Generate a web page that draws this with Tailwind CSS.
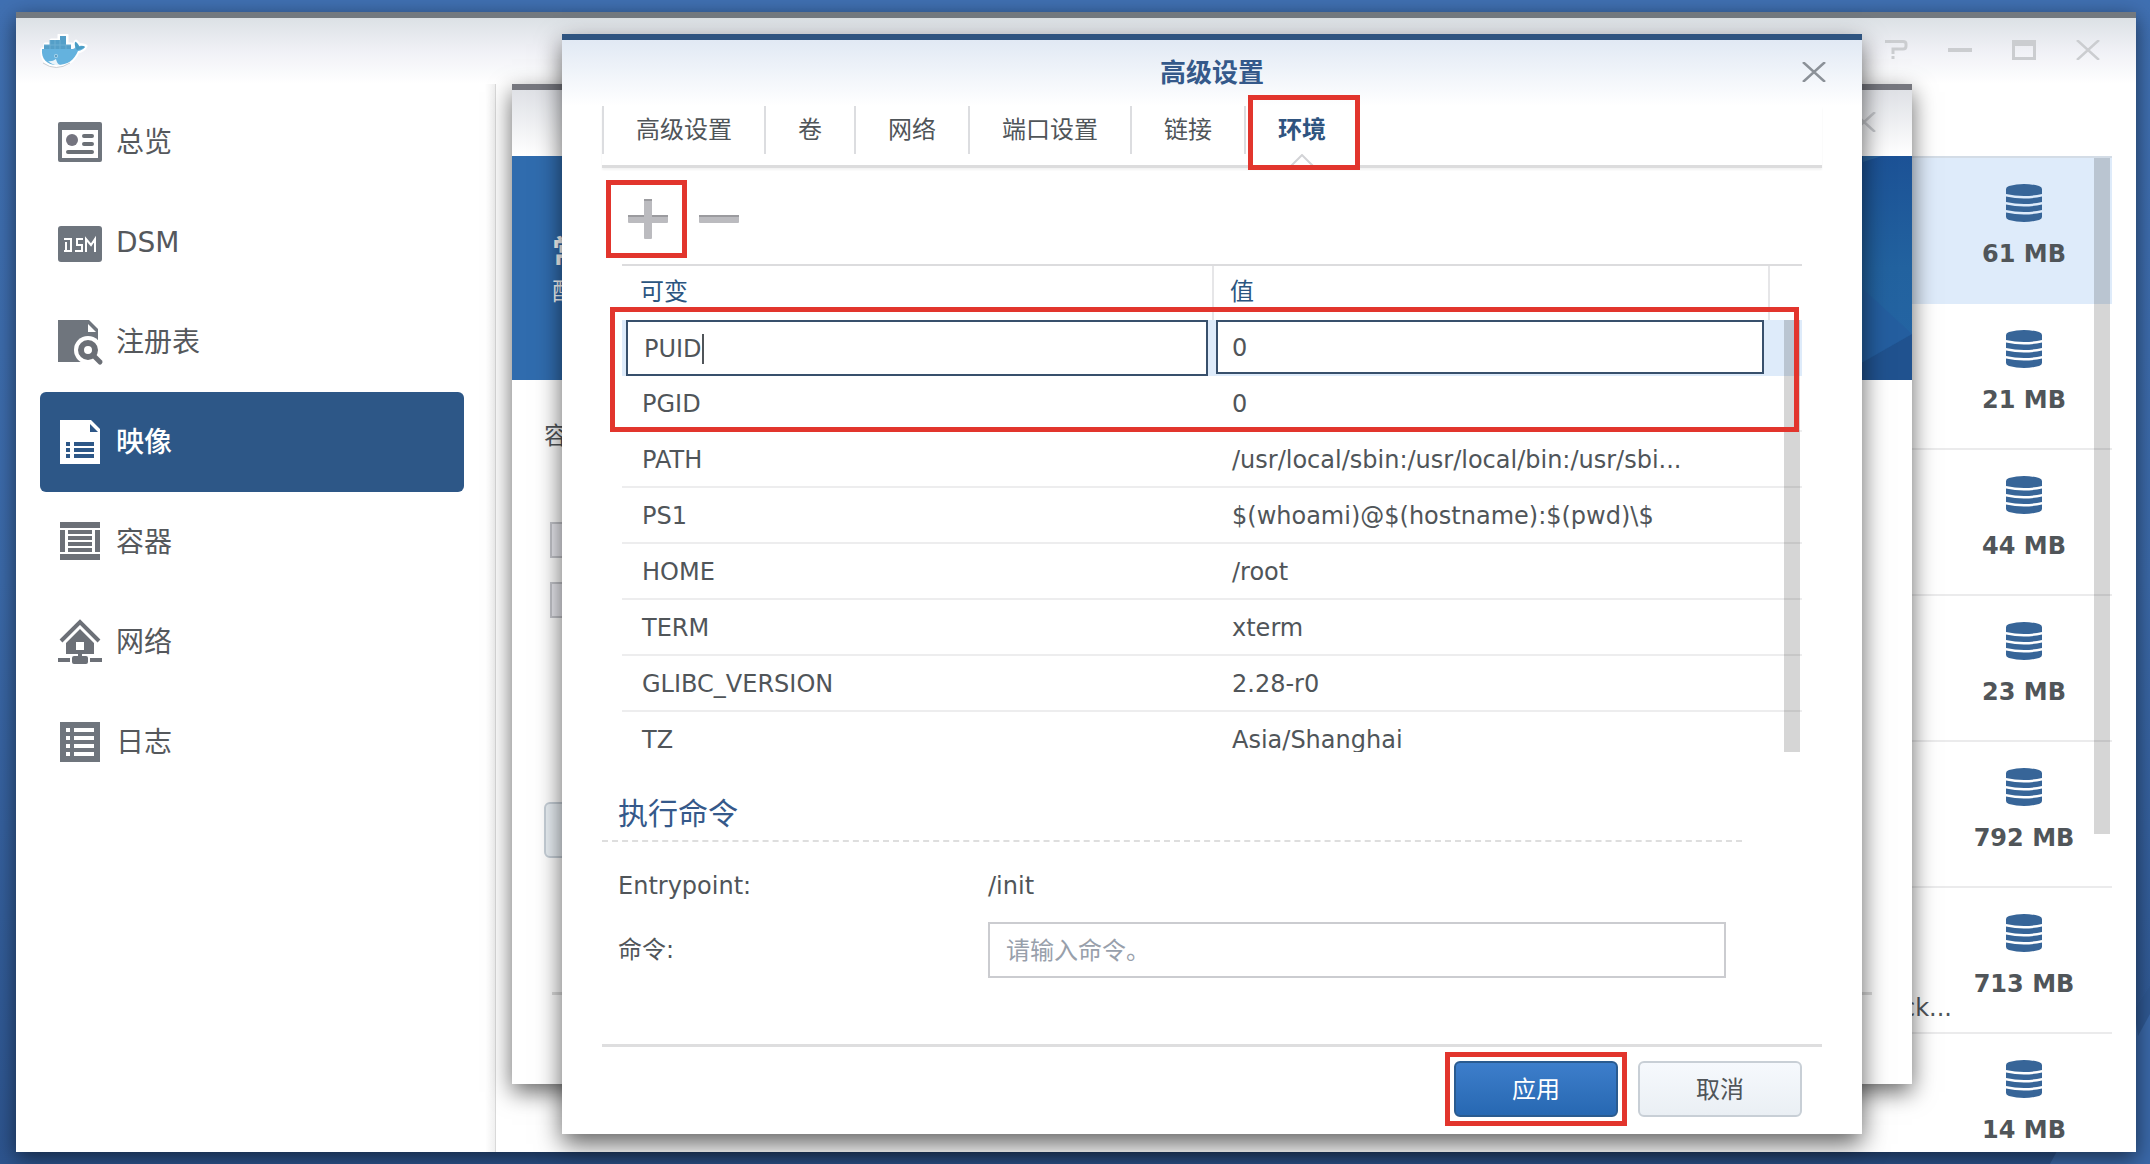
<!DOCTYPE html>
<html lang="zh-CN">
<head>
    <meta charset="UTF-8">
    <meta name="viewport" content="width=device-width, initial-scale=1.0">
    <title>Docker</title>
    <script src="https://cdn.jsdelivr.net/npm/@tailwindcss/browser@4"></script>
</head>
<body class="relative h-screen overflow-hidden bg-linear-to-b from-[#4070b2] via-[#3b69a8] to-[#2d548e] font-['DejaVu_Sans','Noto_Sans_CJK_SC',sans-serif] text-2xl text-[#505559]">
    <!-- Desktop wallpaper -->
    <svg class="absolute right-0 bottom-0 h-[300px] w-[120px]" viewBox="0 0 120 300" aria-hidden="true">
        <path d="M120 0V300H20L104 146L120 121Z" fill="#3a68a8"/>
        <path d="M104 146L120 121V150L108 172Z" fill="#2f5892"/>
    </svg>

    <!-- Shared icons -->
    <svg class="hidden">
        <symbol id="disk" viewBox="0 0 36 38">
            <path d="M0 5Q0 3 3 2Q18-2 33 2Q36 3 36 5V10Q18 14 0 10Z"/>
            <path d="M0 12.500Q18 16.500 36 12.500V18Q18 22 0 18Z"/>
            <path d="M0 20.500Q18 24.500 36 20.500V26Q18 30 0 26Z"/>
            <path d="M0 28.500Q18 32.500 36 28.500V33Q36 35 33 36Q18 40 3 36Q0 35 0 33Z"/>
        </symbol>
        <symbol id="close" viewBox="0 0 24 20">
            <path d="M1 0L23 20M23 0L1 20" fill="none" stroke="currentColor" stroke-width="2.500"/>
        </symbol>
    </svg>

    <!-- Docker window -->
    <div class="absolute top-3 right-3.5 bottom-3 left-4 flex flex-col border-t-6 border-[#73797f] bg-white shadow-[0_6px_20px_rgba(0,0,0,0.55)]">
        <header class="flex h-[66px] shrink-0 items-start justify-between bg-linear-to-b from-[#dce1e5] via-[#f0f1f6] to-white pr-9 pl-6">
            <svg class="mt-4 h-9 w-[48px]" viewBox="0 0 48 36" role="img" aria-label="Docker">
                <path d="M2 15H5V10H11V6H19V1H27V10H32V15H35Q33 10 36 7L40 11Q43 10 46 12Q44 17 38 18C34 27 28 32 17 32C7 32 1 26 2 15Z" fill="#fff" stroke="#fff" stroke-width="3" stroke-linejoin="round"/>
                <path d="M3 29Q16 38 30 29" fill="none" stroke="#c9cdd2" stroke-width="1"/>
                <path d="M4 11H10V6H20V2H26V11H31V16H4Z" fill="#559fc8"/>
                <path d="M10 6V16M15 6V16M20 6V16M26 11V16M4 11H31" stroke="#6caed2" stroke-width="1"/>
                <path d="M2 15H33Q37 14 35 8Q36 7 39 12Q43 11 45 13Q43 16 38 17C34 26 28 31 17 31C7 31 1 25 2 15Z" fill="#64b2de"/>
                <path d="M35 8Q39 10 39 13Q43 11 45 13Q41 16 37 16Q34 12 35 8Z" fill="#4b9dc4"/>
                <path d="M8 27Q12 28 16 25Q17 30 20 31Q13 32 8 27Z" fill="#eaf4fa"/>
                <circle cx="16" cy="22" r="2" fill="#a9d5ec"/>
                <circle cx="16" cy="22" r="1" fill="#4c8cb2"/>
            </svg>
            <div class="mt-[22px] flex gap-10 text-[#cbcdd0]">
                <button type="button" aria-label="帮助">
                    <svg class="h-5 w-6" viewBox="0 0 24 20"><path d="M1 1.500H19Q22 1.500 22 4V6Q22 9 19 9H9V14M9 16V19" fill="none" stroke="currentColor" stroke-width="3"/></svg>
                </button>
                <button type="button" aria-label="最小化">
                    <svg class="h-5 w-6" viewBox="0 0 24 20"><path d="M0 10H24" stroke="currentColor" stroke-width="4"/></svg>
                </button>
                <button type="button" aria-label="最大化">
                    <svg class="h-5 w-6" viewBox="0 0 24 20"><path d="M0 0H24V20H0ZM3 6V17H21V6Z" fill="currentColor" fill-rule="evenodd"/></svg>
                </button>
                <button type="button" aria-label="关闭"><svg class="h-5 w-6"><use href="#close"/></svg></button>
            </div>
        </header>

        <div class="flex min-h-0 flex-1">
            <nav class="flex w-[480px] shrink-0 flex-col border-r border-[#d9d9d9] bg-linear-to-r from-white from-98% to-[#f0f0f0] px-6 pt-2 text-[28px] text-[#55585c]">
                <a href="#" class="flex h-[100px] w-[424px] items-center gap-3 rounded-md px-4">
                    <svg class="size-12" viewBox="0 0 48 48"><path d="M4 4H44Q46 4 46 6V42Q46 44 44 44H4Q2 44 2 42V6Q2 4 4 4ZM6 12V40H42V12Z" fill="#6f757d" fill-rule="evenodd"/><circle cx="16" cy="22" r="6" fill="#74747f"/><path d="M28 18H36M28 26H36M12 34H36" stroke="#6b7076" stroke-width="4" stroke-linecap="round"/></svg>
                    <span class="pt-0.5">总览</span>
                </a>
                <a href="#" class="flex h-[100px] w-[424px] items-center gap-3 rounded-md px-4">
                    <svg class="size-12" viewBox="0 0 48 48"><rect x="2" y="8" width="44" height="36" rx="3" fill="#6e757e"/><path d="M8 21H15V33H8M10 24V33M27 21H21V27H26V33H19M30 34V21L35 27L39 21V34" fill="none" stroke="#fff" stroke-width="2"/></svg>
                    <span class="pt-0.5">DSM</span>
                </a>
                <a href="#" class="flex h-[100px] w-[424px] items-center gap-3 rounded-md px-4">
                    <svg class="size-12" viewBox="0 0 48 48"><path d="M2 2H33L42 11V44H2Z" fill="#6f757d"/><path d="M32 6V14H40Z" fill="#fff"/><circle cx="32" cy="32" r="14" fill="#fff"/><path d="M34 44H44V32Z" fill="#fff"/><circle cx="32" cy="32" r="7" fill="none" stroke="#6b6f76" stroke-width="6"/><path d="M37 37L44 44" stroke="#6b6f76" stroke-width="5" stroke-linecap="round"/></svg>
                    <span class="pt-0.5">注册表</span>
                </a>
                <a href="#" aria-current="page" class="flex h-[100px] w-[424px] items-center gap-3 rounded-md bg-[#2d5787] px-4 font-medium text-white">
                    <svg class="size-12" viewBox="0 0 48 48"><path d="M4 2H35L44 11V46H4Z" fill="#fff"/><path d="M34 6V14H42ZM10 24h4v4h-4ZM18 24h20v4h-20ZM10 30h4v4h-4ZM18 30h20v4h-20ZM10 36h4v4h-4ZM18 36h20v4h-20Z" fill="#2d5787"/></svg>
                    <span class="pt-0.5">映像</span>
                </a>
                <a href="#" class="flex h-[100px] w-[424px] items-center gap-3 rounded-md px-4">
                    <svg class="size-12" viewBox="0 0 48 48"><path d="M4 4H44V10H4ZM4 12H9V34H4ZM39 12H44V34H39ZM4 36H44V42H4ZM12 12H36V16H12ZM12 18H36V22H12ZM12 24H36V28H12ZM12 30H36V34H12Z" fill="#6c7077"/></svg>
                    <span class="pt-0.5">容器</span>
                </a>
                <a href="#" class="flex h-[100px] w-[424px] items-center gap-3 rounded-md px-4">
                    <svg class="size-12" viewBox="0 0 48 48"><path d="M5 23L24 4L43 23" fill="none" stroke="#6c7077" stroke-width="4"/><path d="M24 11L38 25V36H26V38H30Q32 38 32 40V44Q32 46 30 46H18Q16 46 16 44V40Q16 38 18 38H22V36H10V25ZM20 24V32H28V24ZM2 40H14V44H2ZM34 40H46V44H34Z" fill="#6c7077" fill-rule="evenodd"/></svg>
                    <span class="pt-0.5">网络</span>
                </a>
                <a href="#" class="flex h-[100px] w-[424px] items-center gap-3 rounded-md px-4">
                    <svg class="size-12" viewBox="0 0 48 48"><path d="M4 4H44V44H4Z" fill="#6f757d"/><path d="M10 10h4v4h-4ZM18 10h20v4h-20ZM10 18h4v4h-4ZM18 18h20v4h-20ZM10 26h4v4h-4ZM18 26h20v4h-20ZM10 34h4v4h-4ZM18 34h20v4h-20Z" fill="#fff"/></svg>
                    <span class="pt-0.5">日志</span>
                </a>
            </nav>

            <!-- Image list -->
            <main class="relative min-w-0 flex-1 overflow-hidden px-6 pt-[72px]">
                <ul class="border-t-2 border-[#d3dce6] font-bold">
                    <li class="flex h-[146px] justify-end bg-[#deebfa] pr-4">
                        <div class="flex w-36 flex-col items-center pt-[26px]"><svg class="h-[38px] w-9 fill-[#376598]"><use href="#disk"/></svg><span class="mt-[14px] leading-9">61 MB</span></div>
                    </li>
                    <li class="flex h-[146px] justify-end border-b-2 border-[#ebebec] pr-4">
                        <div class="flex w-36 flex-col items-center pt-[26px]"><svg class="h-[38px] w-9 fill-[#376598]"><use href="#disk"/></svg><span class="mt-[14px] leading-9">21 MB</span></div>
                    </li>
                    <li class="flex h-[146px] justify-end border-b-2 border-[#ebebec] pr-4">
                        <div class="flex w-36 flex-col items-center pt-[26px]"><svg class="h-[38px] w-9 fill-[#376598]"><use href="#disk"/></svg><span class="mt-[14px] leading-9">44 MB</span></div>
                    </li>
                    <li class="flex h-[146px] justify-end border-b-2 border-[#ebebec] pr-4">
                        <div class="flex w-36 flex-col items-center pt-[26px]"><svg class="h-[38px] w-9 fill-[#376598]"><use href="#disk"/></svg><span class="mt-[14px] leading-9">23 MB</span></div>
                    </li>
                    <li class="flex h-[146px] justify-end border-b-2 border-[#ebebec] pr-4">
                        <div class="flex w-36 flex-col items-center pt-[26px]"><svg class="h-[38px] w-9 fill-[#376598]"><use href="#disk"/></svg><span class="mt-[14px] leading-9">792 MB</span></div>
                    </li>
                    <li class="flex h-[146px] justify-end border-b-2 border-[#ebebec] pr-4">
                        <span class="self-end pb-1 leading-10 font-normal">ck...</span>
                        <div class="flex w-36 flex-col items-center pt-[26px]"><svg class="h-[38px] w-9 fill-[#376598]"><use href="#disk"/></svg><span class="mt-[14px] leading-9">713 MB</span></div>
                    </li>
                    <li class="flex h-[146px] justify-end pr-4">
                        <div class="flex w-36 flex-col items-center pt-[26px]"><svg class="h-[38px] w-9 fill-[#376598]"><use href="#disk"/></svg><span class="mt-[14px] leading-9">14 MB</span></div>
                    </li>
                </ul>
                <div class="absolute top-[74px] right-[26px] h-[676px] w-4 bg-black/16"></div>
            </main>
        </div>
    </div>

    <!-- Container wizard behind the dialog -->
    <section class="absolute top-[84px] right-[238px] bottom-20 left-[512px] flex flex-col border-t-6 border-[#76777e] bg-white shadow-[0_8px_22px_rgba(0,0,0,0.6)]">
        <div class="flex h-[66px] shrink-0 justify-end bg-linear-to-b from-[#dfe1e6] to-white pt-[22px] pr-9 text-[#c5c7cb]">
            <button type="button" aria-label="关闭" class="h-5"><svg class="h-5 w-6"><use href="#close"/></svg></button>
        </div>
        <div class="relative h-[224px] shrink-0 overflow-hidden bg-[#306cae] pt-[72px] pl-10 text-white">
            <svg class="absolute top-0 right-0 h-full w-[120px]" viewBox="0 0 120 224" preserveAspectRatio="none" aria-hidden="true">
                <defs>
                    <linearGradient id="banner" x1="0" y1="0" x2="0" y2="1">
                        <stop offset="0" stop-color="#1c5296"/>
                        <stop offset="0.5" stop-color="#22629f"/>
                        <stop offset="1" stop-color="#2565a4"/>
                    </linearGradient>
                </defs>
                <path d="M0 0H120V224H0Z" fill="url(#banner)"/>
                <path d="M71 0H90L71 6Z" fill="#2c659f"/>
                <path d="M71 133L120 178L71 206Z" fill="#245e9f"/>
                <path d="M120 178V224H0L71 206Z" fill="#20528f"/>
            </svg>
            <h2 class="text-[32px] leading-[48px] font-bold">常规</h2>
            <p class="leading-8">配置</p>
        </div>
        <div class="flex flex-1 flex-col items-start pl-8">
            <label class="mt-11 leading-6" for="name">容器</label>
            <input type="checkbox" aria-label="使用高权限执行容器" class="mt-[74px] ml-1.5 size-9 appearance-none border-2 border-[#c4c5cb] bg-[#ebebf1]">
            <input type="checkbox" aria-label="启用资源限制" class="mt-6 ml-1.5 size-9 appearance-none border-2 border-[#c4c5cb] bg-[#ebebf1]">
            <button type="button" id="name" aria-label="高级设置" class="mt-[184px] h-14 w-40 rounded-md border-2 border-[#c6cfd7] bg-[#eaf0f5]"></button>
            <div class="mt-[134px] ml-2 w-[1320px] max-w-full border-t-3 border-[#dcdcdc]"></div>
        </div>
    </section>

    <!-- Advanced settings dialog -->
    <section role="dialog" aria-labelledby="dialog-title" class="absolute top-[34px] right-[288px] bottom-[30px] left-[562px] flex flex-col border-t-6 border-[#2f5480] bg-white shadow-[0_10px_24px_rgba(0,0,0,0.62)]">
        <header class="relative h-[66px] shrink-0 bg-linear-to-b from-[#e1e9f4] to-white text-center">
            <h1 id="dialog-title" class="text-[26px] leading-[66px] font-bold text-[#35598a]">高级设置</h1>
            <button type="button" aria-label="关闭" class="absolute top-[22px] right-9 h-5 text-[#8b9198]"><svg class="h-5 w-6"><use href="#close"/></svg></button>
        </header>

        <div class="flex flex-1 flex-col px-10">
            <div role="tablist" class="flex h-[62px] shrink-0 border-b-3 border-[#dcdcdd] leading-[48px] shadow-[0_2px_2px_rgba(0,0,0,0.05)]">
                <button type="button" role="tab" class="h-12 border-l-2 border-[#dcdde0] px-8">高级设置</button>
                <button type="button" role="tab" class="h-12 border-l-2 border-[#dcdde0] px-8">卷</button>
                <button type="button" role="tab" class="h-12 border-l-2 border-[#dcdde0] px-8">网络</button>
                <button type="button" role="tab" class="h-12 border-l-2 border-[#dcdde0] px-8">端口设置</button>
                <button type="button" role="tab" class="h-12 border-l-2 border-[#dcdde0] px-8">链接</button>
                <button type="button" role="tab" aria-selected="true" class="relative h-12 border-l-2 border-[#dcdde0] px-8 font-bold text-[#2f5480]">
                    环境
                    <svg class="absolute top-12 left-1/2 h-3 w-6 -translate-x-1/2" viewBox="0 0 24 12"><path d="M1 12L12 1L23 12" fill="#fff" stroke="#d2d3d6" stroke-width="2"/></svg>
                    <span class="absolute -top-[11px] left-0.5 h-[75px] w-28 border-5 border-[#e2352d]"></span>
                </button>
            </div>

            <div class="mt-3 flex h-[78px] shrink-0 items-center gap-3 pl-1">
                <button type="button" aria-label="新增" class="flex h-[78px] w-[81px] items-center justify-center border-5 border-[#e2352d] pl-0.5">
                    <svg class="size-10" viewBox="0 0 40 40"><path d="M1 16H16V1Q16 0 17 0H23Q24 0 24 1V16H39Q40 16 40 17V23Q40 24 39 24H24V39Q24 40 23 40H17Q16 40 16 39V24H1Q0 24 0 23V17Q0 16 1 16Z" fill="#bbbbbf"/><path d="M0 17H16M24 17H40M16 1H24" stroke="#9b9b9f" stroke-width="2"/></svg>
                </button>
                <button type="button" aria-label="删除">
                    <svg class="size-10" viewBox="0 0 40 40"><rect y="16" width="40" height="8" rx="1" fill="#bbbbbf"/><path d="M0 17H40" stroke="#9b9b9f" stroke-width="2"/></svg>
                </button>
            </div>

            <!-- Environment variables -->
            <div class="relative mx-5 mt-1.5 h-[488px] shrink-0">
                <div class="h-full overflow-hidden">
                    <table class="w-full table-fixed border-separate border-spacing-0 border-t-2 border-[#dcdcde] text-left">
                        <colgroup><col><col class="w-[556px]"><col class="w-[34px]"></colgroup>
                        <thead class="text-[#2b5580]">
                            <tr class="h-[54px]">
                                <th class="pb-0.5 pl-[18px] font-normal">可变</th>
                                <th class="border-l-2 border-[#e6e6e8] pb-0.5 pl-4 font-normal">值</th>
                                <th class="border-l-2 border-[#e6e6e8]"></th>
                            </tr>
                        </thead>
                        <tbody>
                            <tr class="h-14 bg-[#deebfa]">
                                <td class="pr-1 pl-1"><input type="text" value="PUID" aria-label="可变" class="block h-14 w-full border-2 border-[#38506c] bg-white px-4 pt-0.5 outline-none"></td>
                                <td class="pr-1 pl-1 align-top"><input type="text" value="0" aria-label="值" class="block h-[54px] w-full border-2 border-[#38506c] bg-white px-[14px] pt-0.5 outline-none"></td>
                                <td></td>
                            </tr>
                            <tr class="h-14"><td class="border-b-2 border-[#ededee] pt-0.5 pl-5">PGID</td><td class="border-b-2 border-[#ededee] pt-0.5 pl-5">0</td><td class="border-b-2 border-[#ededee]"></td></tr>
                            <tr class="h-14"><td class="border-b-2 border-[#ededee] pt-0.5 pl-5">PATH</td><td class="border-b-2 border-[#ededee] pt-0.5 pl-5">/usr/local/sbin:/usr/local/bin:/usr/sbi...</td><td class="border-b-2 border-[#ededee]"></td></tr>
                            <tr class="h-14"><td class="border-b-2 border-[#ededee] pt-0.5 pl-5">PS1</td><td class="border-b-2 border-[#ededee] pt-0.5 pl-5">$(whoami)@$(hostname):$(pwd)\$</td><td class="border-b-2 border-[#ededee]"></td></tr>
                            <tr class="h-14"><td class="border-b-2 border-[#ededee] pt-0.5 pl-5">HOME</td><td class="border-b-2 border-[#ededee] pt-0.5 pl-5">/root</td><td class="border-b-2 border-[#ededee]"></td></tr>
                            <tr class="h-14"><td class="border-b-2 border-[#ededee] pt-0.5 pl-5">TERM</td><td class="border-b-2 border-[#ededee] pt-0.5 pl-5">xterm</td><td class="border-b-2 border-[#ededee]"></td></tr>
                            <tr class="h-14"><td class="border-b-2 border-[#ededee] pt-0.5 pl-5">GLIBC_VERSION</td><td class="border-b-2 border-[#ededee] pt-0.5 pl-5">2.28-r0</td><td class="border-b-2 border-[#ededee]"></td></tr>
                            <tr class="h-14"><td class="border-b-2 border-[#ededee] pt-0.5 pl-5">TZ</td><td class="border-b-2 border-[#ededee] pt-0.5 pl-5">Asia/Shanghai</td><td class="border-b-2 border-[#ededee]"></td></tr>
                        </tbody>
                    </table>
                </div>
                <!-- text caret of the focused field -->
                <span class="absolute top-[70px] left-20 h-[30px] w-0.5 bg-[#505559]"></span>
                <div class="absolute top-14 right-0.5 bottom-0 w-4 bg-black/16"></div>
                <div class="absolute top-[43px] right-[3px] -left-3 h-[125px] border-5 border-[#e2352d]"></div>
            </div>

            <!-- Command -->
            <h2 class="mt-[42px] mr-20 border-b-2 border-dashed border-[#dedede] pb-1.5 pl-4 text-[30px] leading-10 text-[#35598a]">执行命令</h2>
            <div class="mt-6 flex h-10 items-center pl-4">
                <span class="w-[370px]">Entrypoint:</span>
                <span>/init</span>
            </div>
            <div class="mt-4 mr-24 flex h-14 items-center pl-4">
                <label for="command" class="w-[370px] shrink-0">命令:</label>
                <input id="command" type="text" placeholder="请输入命令。" class="h-14 min-w-0 flex-1 border-2 border-[#cbccd0] px-4 pt-0.5 placeholder:text-[#98a0ab]">
            </div>

            <footer class="mt-auto flex h-[90px] shrink-0 items-start justify-end gap-[11px] border-t-3 border-[#dededf] pt-[5px] pr-5">
                <div class="h-[74px] border-5 border-[#e2352d] p-1">
                    <button type="button" class="h-14 w-[164px] rounded-md border-2 border-[#2a5b90] bg-linear-to-b from-[#3d7ecb] to-[#2768b2] pt-0.5 text-white">应用</button>
                </div>
                <button type="button" class="mt-[9px] h-14 w-[164px] rounded-md border-2 border-[#c8cfd6] bg-linear-to-b from-[#f6f9fd] to-[#eaeff4] pt-0.5">取消</button>
            </footer>
        </div>
    </section>
</body>
</html>
